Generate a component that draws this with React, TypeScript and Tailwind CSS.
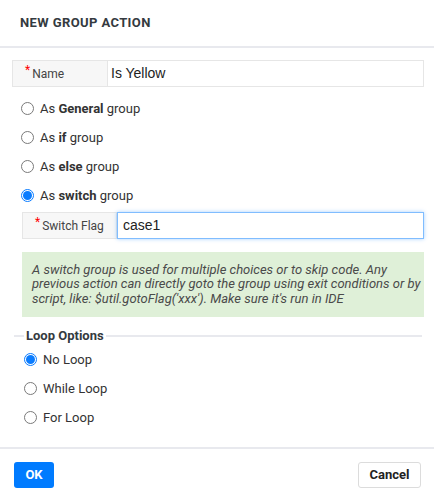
import React from "react";

function Radio({ checked }: { checked?: boolean }) {
  return checked ? (
    <span className="w-[13px] h-[13px] rounded-full border border-[#0a7cff] bg-white flex items-center justify-center shrink-0">
      <span className="w-[9px] h-[9px] rounded-full bg-[#0a7cff]" />
    </span>
  ) : (
    <span className="w-[13px] h-[13px] rounded-full border border-[#7a7a7a] bg-white shrink-0" />
  );
}

function RadioRow({ checked, children }: { checked?: boolean; children: React.ReactNode }) {
  return (
    <div className="h-[29px] flex items-center gap-[6px] text-[13px] text-[#333]">
      <Radio checked={checked} />
      <span>{children}</span>
    </div>
  );
}

export default function App() {
  return (
    <div className="w-[434px] h-[498px] bg-white overflow-hidden" style={{ fontFamily: "Roboto, 'Liberation Sans', sans-serif" }}>
      <div className="h-[48px] px-[20px] flex items-center border-b-2 border-[#e8e9ee]">
        <span className="text-[13px] font-bold tracking-[0.4px] text-[#343a40]">NEW GROUP ACTION</span>
      </div>
      <div className="pl-[12px] pr-[10px] pt-[12px]">
        <div className="flex h-[27px] border border-[#e6e6e6]">
          <div className="w-[95px] bg-[#f7f7f7] border-r border-[#e6e6e6] flex items-center pl-[12px] text-[12px] text-[#444]">
            <span className="text-[#f00] text-[12px] relative -top-[4px] mr-[2px]">*</span>Name
          </div>
          <div className="flex-1 flex items-center pl-[3px] text-[14px] text-[#222]" style={{ fontFamily: "'Liberation Sans', Arial, sans-serif" }}>
            Is Yellow
          </div>
        </div>
        <div className="pl-[9px] pt-[7px]">
          <RadioRow>As <b>General</b> group</RadioRow>
          <RadioRow>As <b>if</b> group</RadioRow>
          <RadioRow>As <b>else</b> group</RadioRow>
          <RadioRow checked>As <b>switch</b> group</RadioRow>
        </div>
        <div className="pl-[10px] pt-[2px]">
          <div className="flex h-[27px]">
            <div className="w-[95px] bg-[#f7f7f7] border border-[#e6e6e6] flex items-center pl-[12px] text-[12px] text-[#444]">
              <span className="text-[#f00] text-[12px] relative -top-[4px] mr-[2px]">*</span>Switch Flag
            </div>
            <div
              className="flex-1 flex items-center pl-[5px] text-[14px] text-[#222] border border-[#80bdff] shadow-[0_0_4px_rgba(0,123,255,0.35)]"
              style={{ fontFamily: "'Liberation Sans', Arial, sans-serif" }}
            >
              case1
            </div>
          </div>
          <div className="mt-[13px] h-[65px] bg-[#dff0d8] pl-[10px] flex flex-col justify-center text-[13px] italic leading-[14.5px] text-[#4a4a4a] whitespace-nowrap">
            <div>A switch group is used for multiple choices or to skip code. Any</div>
            <div>previous action can directly goto the group using exit conditions or by</div>
            <div>script, like: $util.gotoFlag('xxx'). Make sure it's run in IDE</div>
          </div>
        </div>
        <div className="mt-[11px] pl-[2px] pr-[2px]">
          <div className="flex items-center h-[16px]">
            <div className="w-[10px] h-[2px] bg-[#e8e9ee]" />
            <span className="px-[2px] text-[13px] font-bold text-[#343a40]">Loop Options</span>
            <div className="flex-1 h-[2px] bg-[#e8e9ee]" />
          </div>
          <div className="pl-[10px] pt-[1px]">
            <RadioRow checked>No Loop</RadioRow>
            <RadioRow>While Loop</RadioRow>
            <RadioRow>For Loop</RadioRow>
          </div>
        </div>
      </div>
      <div className="mt-[15px] border-t-2 border-[#e8e9ee] px-[14px] pt-[13px] flex justify-between pr-[13px]">
        <button className="w-[40px] h-[26px] rounded-[3px] bg-[#007bff] text-white text-[13px] font-bold">OK</button>
        <button className="w-[63px] h-[26px] rounded-[3px] bg-white border border-[#dcdcdc] text-[#222] text-[13px] font-bold">Cancel</button>
      </div>
    </div>
  );
}
